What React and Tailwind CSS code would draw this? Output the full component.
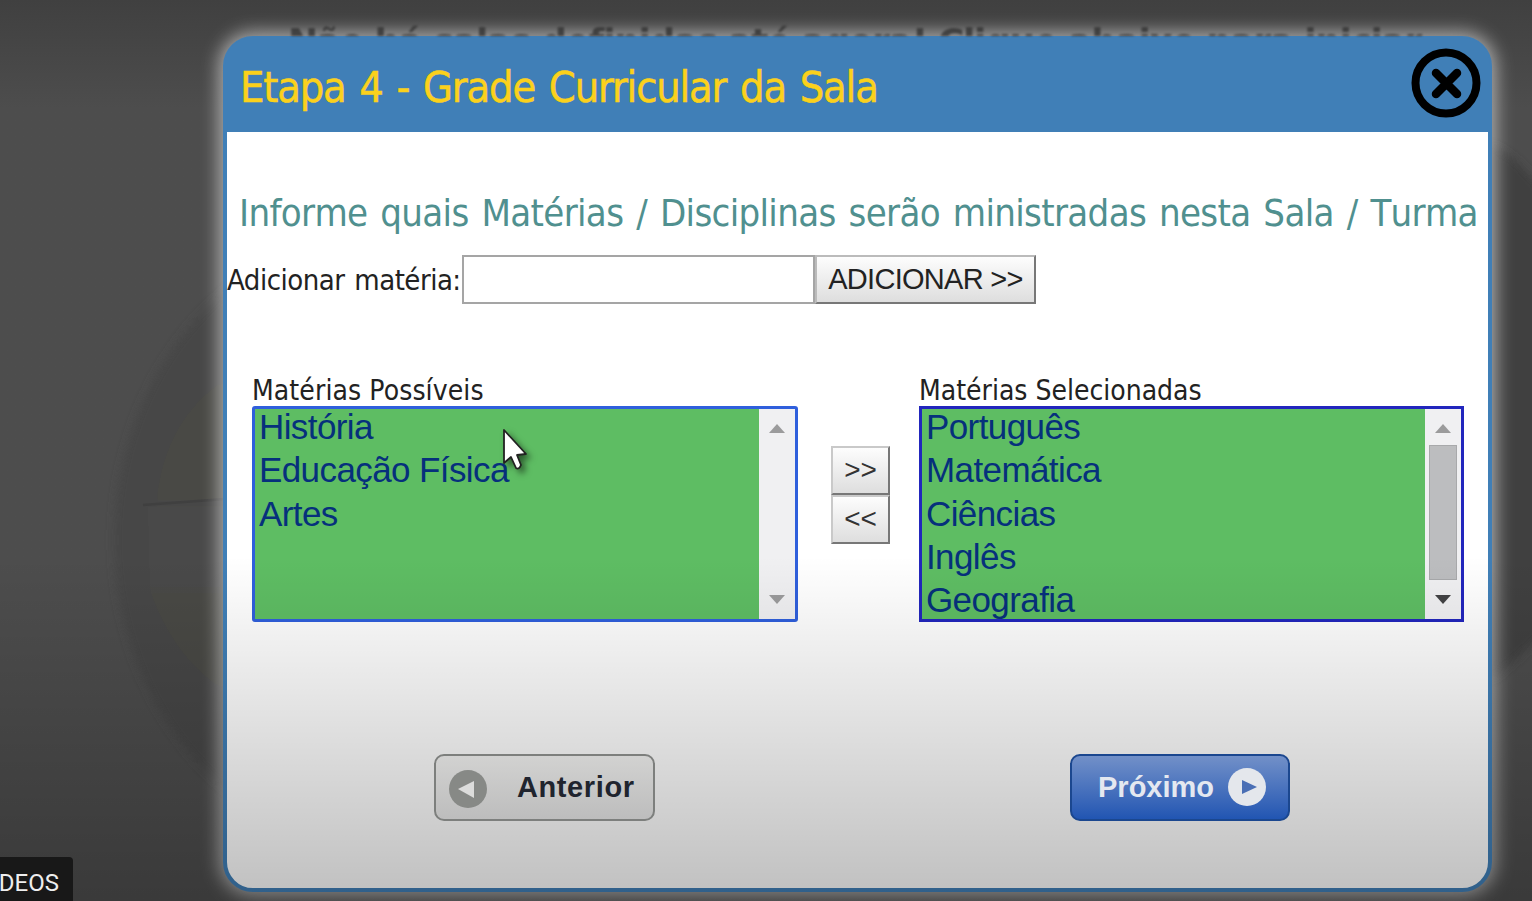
const possible = ["História", "Educação Física", "Artes"];
const selected = ["Português", "Matemática", "Ciências", "Inglês", "Geografia"];

function Arrow({ up, dark }) {
  return (
    <svg width="18" height="10" viewBox="0 0 18 10" className="shrink-0">
      <path d={up ? "M1 10 9 1l8 9z" : "M1 0h16L9 9z"} fill={dark ? "#424244" : "#9b9b9c"} />
    </svg>
  );
}

function ListBox({ items, focused, thumb }) {
  return (
    <div
      className={
        focused
          ? "flex h-[216px] w-[546px] rounded-[3px] border-[3px] border-[#2f5fdc] bg-[#5ebd63]"
          : "flex h-[216px] w-[545px] border-[3px] border-[#2226bd] bg-[#5ebd63]"
      }
    >
      <ul className="-mt-[4px] min-w-0 flex-1 pl-[4px] font-['Liberation_Sans',Arial,sans-serif] text-[35px] leading-[43.3px] tracking-[-0.6px] text-[#06307c]">
        {items.map((item) => (
          <li key={item} className="h-[43.3px] whitespace-nowrap">{item}</li>
        ))}
      </ul>
      <div className="flex w-[36px] flex-col items-center justify-between bg-[#f0f0f2] pt-[14px] pb-[14px]">
        <Arrow up />
        {thumb && <div className="mb-[3px] h-[135px] w-[28px] border border-[#a8a9ab] bg-[#bcbdbf]" />}
        <Arrow dark={thumb} />
      </div>
    </div>
  );
}

function MoveButton({ children }) {
  return (
    <button className="h-[49px] w-[59px] border-2 border-t-[#c9c9c9] border-r-[#777] border-b-[#777] border-l-[#c9c9c9] bg-linear-to-b from-[#fdfdfd] to-[#dedede] pb-[2px] font-['Liberation_Sans',Arial,sans-serif] text-[28px] leading-none text-[#333]">
      {children}
    </button>
  );
}

export default function App() {
  return (
    <main className="relative h-[901px] w-[1532px] overflow-hidden bg-linear-to-b from-[#404040] via-[#4d4d4d] via-12% to-[#4d4d4d] pt-[36px] pl-[223px] font-['DejaVu_Sans_Condensed','DejaVu_Sans',sans-serif]">
      <svg className="absolute inset-0" width="1532" height="901" viewBox="0 0 1532 901">
        <defs>
          <filter id="soft" x="-10%" y="-10%" width="120%" height="120%">
            <feGaussianBlur stdDeviation="4" />
          </filter>
        </defs>
        <g filter="url(#soft)">
          <ellipse cx="390" cy="540" rx="276" ry="310" fill="#464646" />
          <path d="M225 380Q165 420 157 500H225zM150 590H225V690Q175 660 150 590z" fill="#4a4a45" />
          <path d="M148 507H225V590H150z" fill="#4a4a4a" />
          <path d="M1492 145Q1532 165 1560 220V620L1492 680z" fill="#404040" />
        </g>
        <path d="M143 505L225 499" stroke="#404040" strokeWidth="2.500" />
      </svg>
      <section className="relative flex h-[856px] w-[1269px] flex-col rounded-[30px] border-4 border-[#407fb7] bg-white shadow-[0_0_18px_4px_rgba(255,255,255,0.55)]">
        <p className="absolute -top-[27px] left-[61px] h-[23px] w-[1150px] overflow-hidden font-['DejaVu_Sans',sans-serif] text-[36px] leading-[57px] font-bold tracking-[-1.32px] whitespace-nowrap text-[#343434] opacity-80 blur-[0.8px]">
          Não há salas definidas até agora! Clique abaixo para iniciar
        </p>
        <header className="-mx-[2px] -mt-[2px] flex h-[94px] shrink-0 items-center justify-between rounded-t-[26px] bg-[#407fb7] pt-[2px] pr-[9px] pl-[15px]">
          <h1 className="pt-[2px] text-[43px] leading-none tracking-[-1.2px] [word-spacing:2.7px] whitespace-nowrap text-[#fbd11c] [-webkit-text-stroke:0.5px_#fbd11c]">
            Etapa 4 - Grade Curricular da Sala
          </h1>
          <svg width="70" height="70" viewBox="0 0 70 70" className="-mt-[6px]">
            <circle cx="35" cy="35" r="30.5" fill="none" stroke="#000" strokeWidth="8" />
            <path d="M25 25 46 46M46 25 25 46" stroke="#000" strokeWidth="8.500" strokeLinecap="round" />
          </svg>
        </header>
        <h2 className="mt-[56px] h-[51px] pl-[12px] text-[38px] leading-[51px] tracking-[-0.67px] [word-spacing:2.7px] whitespace-nowrap text-[#50908f] [font-kerning:none]">
          Informe quais Matérias / Disciplinas serão ministradas nesta Sala / Turma
        </h2>
        <div className="mt-[16px] flex h-[49px] items-center text-[#222]">
          <label className="w-[235px] shrink-0 pt-[2px] text-[29px] tracking-[-0.5px] [word-spacing:2px] whitespace-nowrap">Adicionar matéria:</label>
          <input className="h-[49px] w-[353px] border-2 border-[#a5a5a5] bg-white outline-none" />
          <button className="h-[49px] w-[221px] border-2 border-t-[#bbb] border-r-[#777] border-b-[#777] border-l-[#bbb] bg-linear-to-b from-[#fdfdfd] to-[#dedede] font-['Liberation_Sans',Arial,sans-serif] text-[29px] leading-none tracking-[-0.7px] whitespace-nowrap">
            ADICIONAR &gt;&gt;
          </button>
        </div>
        <div className="mt-[68px] flex pl-[25px]">
          <div>
            <h3 className="h-[34px] pt-[2px] text-[28px] leading-[34px] tracking-[0.1px] whitespace-nowrap text-[#222]">Matérias Possíveis</h3>
            <ListBox items={possible} focused />
          </div>
          <div className="mt-[74px] ml-[33px] flex w-[59px] flex-col">
            <MoveButton>&gt;&gt;</MoveButton>
            <MoveButton>&lt;&lt;</MoveButton>
          </div>
          <div className="ml-[29px]">
            <h3 className="h-[34px] pt-[2px] text-[28px] leading-[34px] whitespace-nowrap text-[#222]">Matérias Selecionadas</h3>
            <ListBox items={selected} thumb />
          </div>
        </div>
        <div className="relative z-10 mt-[132px] flex gap-[415px] pl-[207px] font-['Liberation_Sans',Arial,sans-serif] text-[29px] font-bold">
          <button className="flex h-[67px] w-[221px] items-center rounded-[10px] border-2 border-[#7d7f7d] bg-linear-to-b from-[#d2d2d1] to-[#bdbdbd] pl-[12px] text-[#20242e]">
            <svg width="40" height="40" viewBox="0 0 40 40">
              <circle cx="20" cy="21" r="19" fill="#878986" />
              <path d="M10 21 26 13v17z" fill="#dcdcdb" />
            </svg>
            <span className="ml-[29px] tracking-[0.6px]">Anterior</span>
          </button>
          <button className="flex h-[67px] w-[220px] items-center rounded-[10px] border-2 border-[#1b478f] bg-linear-to-b from-[#7290c8] to-[#2155b2] pl-[26px] text-[#e4e8f0]">
            <span>Próximo</span>
            <svg width="40" height="40" viewBox="0 0 40 40" className="ml-[13px]">
              <circle cx="20" cy="19" r="19" fill="#e4e7ec" />
              <path d="M15 12 30 19 15 26z" fill="#4a6fb5" />
            </svg>
          </button>
        </div>
      </section>
      <div className="pointer-events-none absolute inset-x-0 bottom-0 h-[345px] bg-linear-to-b from-black/0 to-black/25" />
      <svg className="absolute top-[426px] left-[498px] drop-shadow-[4px_4px_3px_rgba(0,0,0,0.5)]" width="34" height="48" viewBox="0 0 34 48">
        <path d="M6 4V37L13 31 18 42Q21 44 23 39L19 29 28 28z" fill="#fff" stroke="#222" strokeWidth="1.800" strokeLinejoin="round" />
      </svg>
      <div className="absolute bottom-0 left-0 flex h-[44px] w-[73px] items-center justify-end overflow-hidden rounded-tr-[4px] bg-[#181818] pt-[8px] pr-[14px] font-[Roboto,sans-serif] text-[24px] whitespace-nowrap text-[#eee]">
        VÍDEOS
      </div>
    </main>
  );
}
